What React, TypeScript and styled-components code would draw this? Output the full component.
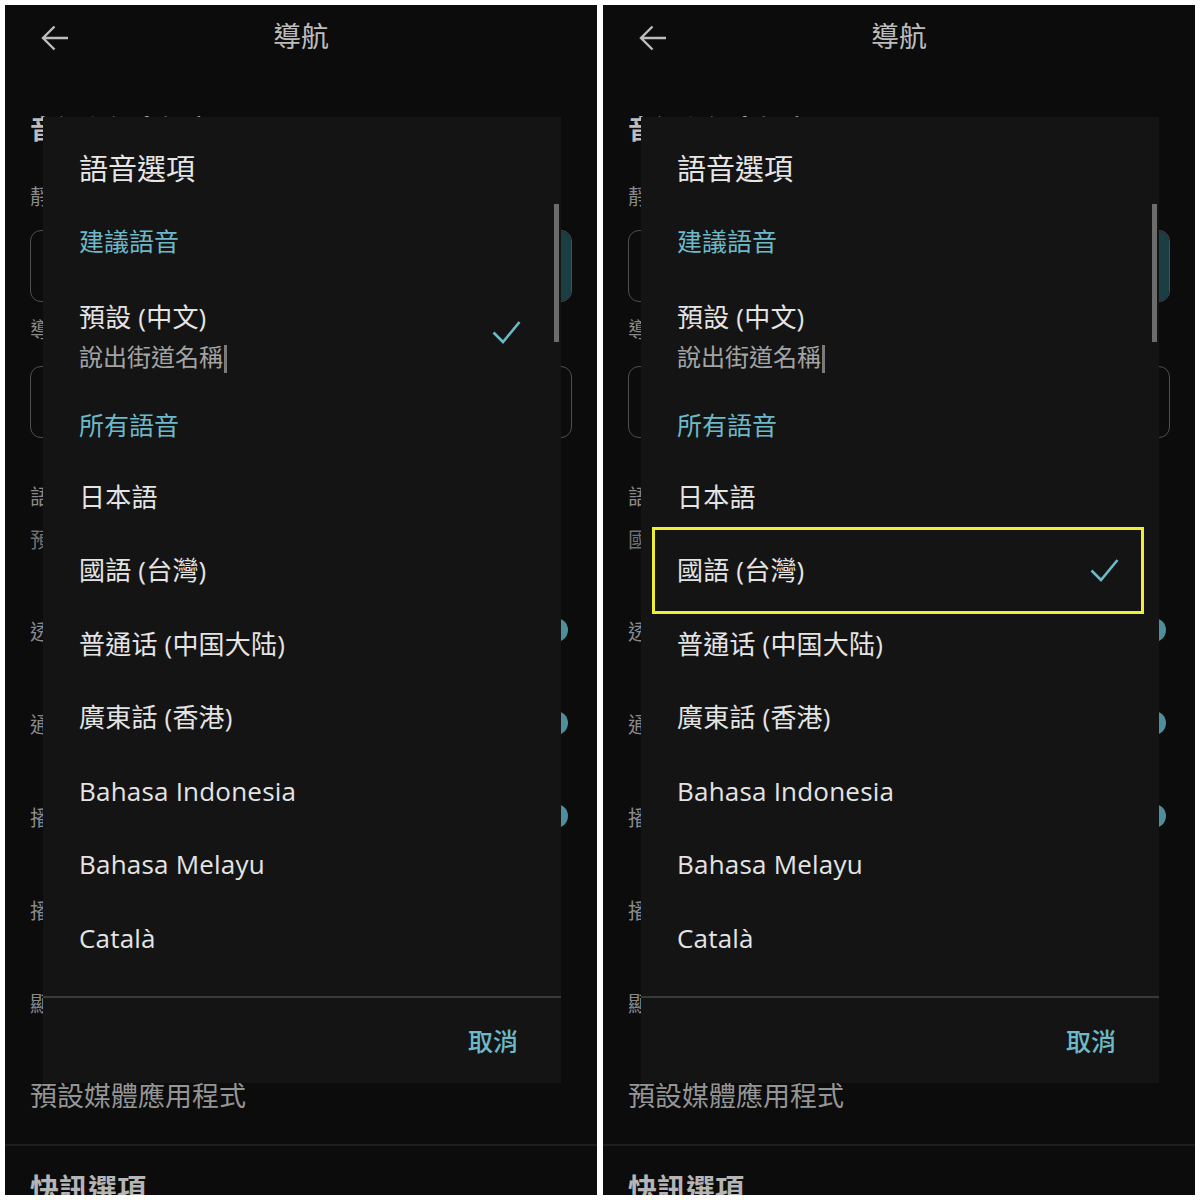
import React from "react";
import styled, { createGlobalStyle } from "styled-components";

const GlobalStyle = createGlobalStyle`
  html, body { margin: 0; padding: 0; background: #ffffff; }
  body { font-family: Roboto, "Noto Sans CJK TC", sans-serif; }
  * { box-sizing: border-box; }
`;

const FONT = `Roboto, "Noto Sans CJK TC", sans-serif`;
const ITEM_FONT = `"Open Sans", "Noto Sans CJK TC", sans-serif`;

const Page = styled.div`
  width: 1200px;
  height: 1200px;
  padding: 5px;
  display: flex;
  gap: 6px;
  background: #ffffff;
`;

const Phone = styled.div`
  position: relative;
  width: 592px;
  height: 1190px;
  overflow: hidden;
  background: #0c0c0c;
  font-family: ${FONT};
`;

/* ---------- background settings screen (dimmed by scrim) ---------- */

const Settings = styled.div`
  display: flex;
  flex-direction: column;
  color: #8e8e8e;
  & > * {
    flex-shrink: 0;
  }
`;

const TopBar = styled.div`
  height: 66px;
  display: grid;
  grid-template-columns: 70px 1fr 70px;
  align-items: center;
`;

const BackButton = styled.div`
  display: flex;
  align-items: center;
  padding-left: 36px;
  color: #bdbdbd;
`;

const TopTitle = styled.div`
  text-align: center;
  font-size: 28px;
  line-height: 36px;
  color: #bcbcbc;
`;

const Body = styled.div`
  display: flex;
  flex-direction: column;
  padding: 0 25px;
  & > * {
    flex-shrink: 0;
  }
`;

const Heading = styled.div<{ $mt: number }>`
  margin-top: ${(p) => p.$mt}px;
  font-size: 26px;
  line-height: 36px;
  font-weight: 700;
  color: #bdbdbd;
  white-space: nowrap;
`;

const Label = styled.div<{ $mt: number }>`
  margin-top: ${(p) => p.$mt}px;
  font-size: 21px;
  line-height: 28px;
  color: #8a8a8a;
  white-space: nowrap;
`;

const Segmented = styled.div<{ $mt: number }>`
  margin-top: ${(p) => p.$mt}px;
  height: 72px;
  display: flex;
  border: 1.5px solid #4e4e4e;
  border-radius: 11px;
  overflow: hidden;
`;

const Segment = styled.div<{ $on?: boolean }>`
  flex: 1;
  background: ${(p) => (p.$on ? "#1b3d44" : "transparent")};
  & + & {
    border-left: 1.5px solid #4e4e4e;
  }
`;

const VoiceBlock = styled.div`
  margin-top: 45px;
  display: flex;
  flex-direction: column;
  gap: 15px;
`;

const VoiceTitle = styled.div`
  font-size: 21px;
  line-height: 28px;
  color: #8a8a8a;
`;

const VoiceSub = styled.div`
  font-size: 21px;
  line-height: 28px;
  color: #707070;
`;

const SwitchList = styled.div`
  margin-top: 29.5px;
  display: flex;
  flex-direction: column;
`;

const SwitchRow = styled.div`
  height: 93px;
  display: flex;
  align-items: center;
  justify-content: space-between;
  font-size: 21px;
  color: #8a8a8a;
`;

const Switch = styled.div<{ $on?: boolean }>`
  width: 52px;
  height: 32px;
  border-radius: 16px;
  background: transparent;
  display: flex;
  align-items: center;
  justify-content: ${(p) => (p.$on ? "flex-end" : "flex-start")};
  padding: 0 4px;
`;

const Thumb = styled.div<{ $on?: boolean }>`
  width: 24px;
  height: 24px;
  border-radius: 50%;
  background: ${(p) => (p.$on ? "#4f8f9c" : "#1a1a1a")};
`;

const MediaText = styled.div`
  margin-top: 30.5px;
  font-size: 27px;
  line-height: 36px;
  color: #959595;
`;

const Divider = styled.div`
  margin: 29px -25px 0;
  height: 2px;
  background: #1e1e1e;
`;

const SectionTitle = styled.div`
  margin-top: 26px;
  font-size: 29px;
  line-height: 36px;
  font-weight: 700;
  color: #b5b5b5;
`;

/* ---------- dialog ---------- */

const Dialog = styled.div`
  position: absolute;
  left: 38px;
  top: 112px;
  width: 518px;
  height: 966px;
  background: #141414;
  display: flex;
  flex-direction: column;
  font-family: ${ITEM_FONT};
`;

const DialogTitle = styled.div`
  margin-top: 34px;
  margin-bottom: 17px;
  padding-left: 36px;
  font-size: 29px;
  line-height: 36px;
  color: #e6e6e6;
`;

const List = styled.div`
  position: relative;
  height: 792px;
  flex-shrink: 0;
  overflow: hidden;
`;

const ScrollBar = styled.div`
  position: absolute;
  right: 2px;
  top: 0;
  width: 5px;
  height: 138px;
  background: #6c6c6c;
`;

const GroupHeader = styled.div`
  height: 72px;
  display: flex;
  align-items: center;
  padding-left: 36px;
  font-size: 25px;
  color: #6cb9c9;
`;

const Item = styled.div<{ $tall?: boolean }>`
  position: relative;
  height: ${(p) => (p.$tall ? "112px" : "73.5px")};
  display: flex;
  align-items: center;
  justify-content: space-between;
  padding: ${(p) => (p.$tall ? "10px 40px 0 36px" : "0 40px 0 36px")};
`;

const CheckSlot = styled.div<{ $tall?: boolean }>`
  display: flex;
  margin-top: ${(p) => (p.$tall ? "-10px" : "0")};
`;

const ItemText = styled.div`
  display: flex;
  flex-direction: column;
  gap: 9px;
`;

const ItemTitle = styled.div`
  font-size: 26px;
  line-height: 32px;
  letter-spacing: 0.2px;
  color: #e4e4e4;
  white-space: nowrap;
`;

const ItemSub = styled.div`
  font-size: 24px;
  line-height: 30px;
  color: #a3a3a3;
  white-space: nowrap;
`;

const Caret = styled.span`
  display: inline-block;
  width: 3px;
  height: 28px;
  margin-left: 1px;
  vertical-align: middle;
  background: #7a7a7a;
`;

const Highlight = styled.div`
  position: absolute;
  left: 11px;
  right: 15px;
  top: -7px;
  bottom: -7px;
  border: 3px solid #eeee35;
  pointer-events: none;
`;

const DialogDivider = styled.div`
  height: 1.5px;
  flex-shrink: 0;
  background: #3a3a3a;
`;

const Footer = styled.div`
  flex: 1;
  display: flex;
  align-items: center;
  justify-content: flex-end;
  padding-right: 43px;
`;

const TextButton = styled.div`
  font-size: 25px;
  font-weight: 500;
  color: #6cb9c9;
`;

const ArrowBack = () => (
  <svg width="28" height="26" viewBox="0 0 28 26" fill="none">
    <path
      d="M27 13H2M13.5 1.5L2 13l11.5 11.5"
      stroke="currentColor"
      strokeWidth="2.4"
      strokeLinecap="butt"
      strokeLinejoin="miter"
    />
  </svg>
);

const CheckIcon = () => (
  <svg width="29" height="25" viewBox="0 0 29 25" fill="none">
    <path
      d="M1.5 12.5L11 22L27.5 2"
      stroke="#6cb9c9"
      strokeWidth="2.6"
      strokeLinecap="butt"
    />
  </svg>
);

const languages = [
  "日本語",
  "國語 (台灣)",
  "普通话 (中国大陆)",
  "廣東話 (香港)",
  "Bahasa Indonesia",
  "Bahasa Melayu",
  "Català",
  "Čeština",
  "Dansk",
];

const switchRows = [
  { label: "透過藍牙播放語音", on: true },
  { label: "通話時播放語音", on: true },
  { label: "播放音訊提示", on: true },
  { label: "播放測試音效", on: false },
  { label: "顯示媒體播放控制項", on: false },
];

const PhoneScreen: React.FC<{ selected: "default" | "tw"; marked?: boolean }> = ({
  selected,
  marked,
}) => (
  <Phone>
    <Settings>
      <TopBar>
        <BackButton>
          <ArrowBack />
        </BackButton>
        <TopTitle>導航</TopTitle>
        <div />
      </TopBar>
      <Body>
        <Heading $mt={41}>音訊和語音設定</Heading>
        <Label $mt={35}>靜音狀態</Label>
        <Segmented $mt={19}>
          <Segment />
          <Segment />
          <Segment $on />
        </Segmented>
        <Label $mt={14}>導航語音音量</Label>
        <Segmented $mt={22}>
          <Segment />
          <Segment />
          <Segment />
        </Segmented>
        <VoiceBlock>
          <VoiceTitle>語音選項</VoiceTitle>
          <VoiceSub>{selected === "tw" ? "國語 (台灣)" : "預設 (中文)"}</VoiceSub>
        </VoiceBlock>
        <SwitchList>
          {switchRows.map((r) => (
            <SwitchRow key={r.label}>
              <span>{r.label}</span>
              <Switch $on={r.on}>
                <Thumb $on={r.on} />
              </Switch>
            </SwitchRow>
          ))}
        </SwitchList>
        <MediaText>預設媒體應用程式</MediaText>
        <Divider />
        <SectionTitle>快訊選項</SectionTitle>
      </Body>
    </Settings>

    <Dialog>
      <DialogTitle>語音選項</DialogTitle>
      <List>
        <GroupHeader>建議語音</GroupHeader>
        <Item $tall>
          <ItemText>
            <ItemTitle>預設 (中文)</ItemTitle>
            <ItemSub>
              說出街道名稱
              <Caret />
            </ItemSub>
          </ItemText>
          {selected === "default" && (
            <CheckSlot $tall>
              <CheckIcon />
            </CheckSlot>
          )}
        </Item>
        <GroupHeader>所有語音</GroupHeader>
        {languages.map((lang) => (
          <Item key={lang}>
            <ItemTitle>{lang}</ItemTitle>
            {selected === "tw" && lang === "國語 (台灣)" && (
              <CheckSlot>
                <CheckIcon />
              </CheckSlot>
            )}
            {marked && lang === "國語 (台灣)" && <Highlight />}
          </Item>
        ))}
        <ScrollBar />
      </List>
      <DialogDivider />
      <Footer>
        <TextButton>取消</TextButton>
      </Footer>
    </Dialog>
  </Phone>
);

export default function App() {
  return (
    <>
      <GlobalStyle />
      <Page>
        <PhoneScreen selected="default" />
        <PhoneScreen selected="tw" marked />
      </Page>
    </>
  );
}
